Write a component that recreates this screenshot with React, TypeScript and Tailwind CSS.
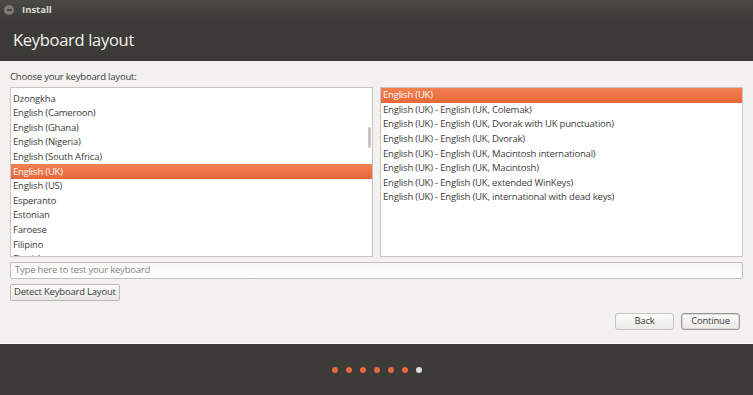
const layouts = [
  "Dzongkha",
  "English (Cameroon)",
  "English (Ghana)",
  "English (Nigeria)",
  "English (South Africa)",
  "English (UK)",
  "English (US)",
  "Esperanto",
  "Estonian",
  "Faroese",
  "Filipino",
  "Finnish",
];

const variants = [
  "English (UK)",
  "English (UK) - English (UK, Colemak)",
  "English (UK) - English (UK, Dvorak with UK punctuation)",
  "English (UK) - English (UK, Dvorak)",
  "English (UK) - English (UK, Macintosh international)",
  "English (UK) - English (UK, Macintosh)",
  "English (UK) - English (UK, extended WinKeys)",
  "English (UK) - English (UK, international with dead keys)",
];

function Row({ label, selected }: { label: string; selected?: boolean }) {
  return (
    <div
      className={
        selected
          ? "flex h-[14.6px] items-center bg-gradient-to-b from-[#f3804f] to-[#e5683a] pl-[2px] text-white"
          : "flex h-[14.6px] items-center pl-[2px] text-[#3c3c3c]"
      }
    >
      {label}
    </div>
  );
}

export default function App() {
  return (
    <div className="flex h-[395px] w-[753px] flex-col overflow-hidden font-['Open_Sans',sans-serif]">
      <div className="flex h-[20px] items-center gap-[6px] bg-gradient-to-b from-[#4a4944] to-[#3c3b37] pl-[4px]">
        <span className="flex h-[10px] w-[10px] items-center justify-center rounded-full bg-[#7d7c77]">
          <span className="h-[1.5px] w-[5px] bg-[#45443f]" />
        </span>
        <span className="pl-[2px] text-[9.5px] font-bold text-[#dfdbd2]">Install</span>
      </div>

      <div className="flex h-[41px] items-start bg-[#3c3b37] pl-[13px] pt-[10px]">
        <span className="text-[16.5px] leading-[20px] tracking-[-0.3px] text-[#f2f1f0]">Keyboard layout</span>
      </div>

      <div className="flex flex-1 flex-col bg-[#f2f1f0] px-[10px] pt-[11px] text-[9.5px] tracking-[-0.2px]">
        <div className="h-[15px] leading-[10px] text-[#3c3c3c]">Choose your keyboard layout:</div>

        <div className="flex h-[170px] gap-[7px]">
          <div className="relative flex-1 overflow-hidden border border-[#c9c6c0] bg-white pt-[3.5px]">
            {layouts.map((l) => (
              <Row key={l} label={l} selected={l === "English (UK)"} />
            ))}
            <span className="absolute right-[1px] top-[39px] h-[21px] w-[3px] rounded-full bg-[#c8c6c2]" />
          </div>
          <div className="flex-1 overflow-hidden border border-[#c9c6c0] bg-white">
            {variants.map((v, i) => (
              <Row key={v} label={v} selected={i === 0} />
            ))}
          </div>
        </div>

        <div className="mt-[5px] flex h-[17px] items-center rounded-[2px] border border-[#c3c0ba] bg-gradient-to-b from-[#f6f6f5] to-white pl-[4px] text-[#8a8a88]">
          Type here to test your keyboard
        </div>

        <div className="mt-[5px] flex">
          <button className="flex h-[17px] items-center rounded-[2px] border border-[#bcb9b3] bg-gradient-to-b from-[#fbfbfa] to-[#e9e8e5] px-[3px] text-[#3c3c3c]">
            Detect Keyboard Layout
          </button>
        </div>

        <div className="mt-[12px] flex justify-end gap-[7px] pr-[3px]">
          <button className="flex h-[17px] w-[59px] items-center justify-center rounded-[3px] border border-[#c6c3bd] bg-gradient-to-b from-[#fbfbfa] to-[#eae9e6] text-[#3c3c3c]">
            Back
          </button>
          <button className="flex h-[17px] w-[59px] items-center justify-center rounded-[3px] border border-[#9a9893] bg-gradient-to-b from-[#fbfbfa] to-[#eae9e6] text-[#3c3c3c] shadow-[inset_0_0_0_1px_#dcdad5]">
            Continue
          </button>
        </div>
      </div>

      <div className="flex h-[52px] items-center justify-center gap-[8px] border-t border-[#f8f8f7] bg-[#3c3b37]">
        {[0, 1, 2, 3, 4, 5].map((i) => (
          <span key={i} className="h-[6px] w-[6px] rounded-full bg-[#e2693b]" />
        ))}
        <span className="h-[6px] w-[6px] rounded-full bg-[#dcdcdc]" />
      </div>
    </div>
  );
}
